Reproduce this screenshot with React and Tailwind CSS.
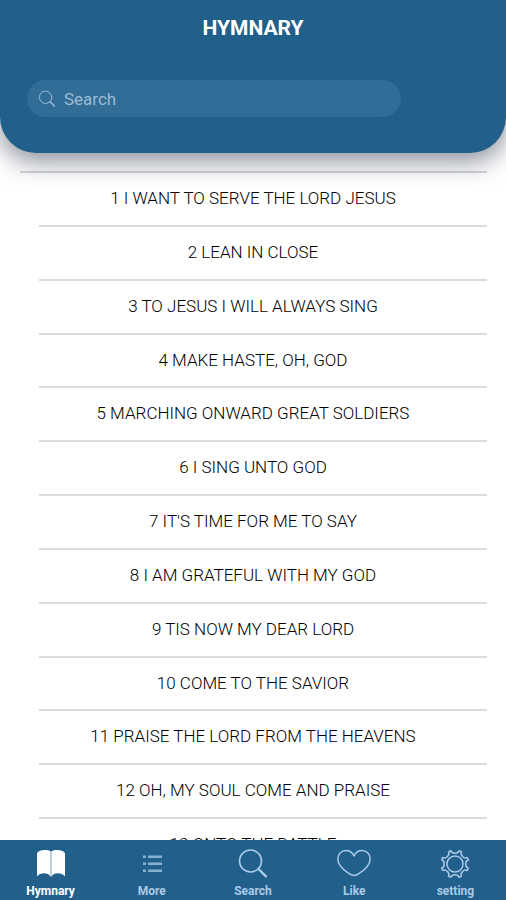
import React, { useState } from "react";

const hymns = [
  "1 I WANT TO SERVE THE LORD JESUS",
  "2 LEAN IN CLOSE",
  "3 TO JESUS I WILL ALWAYS SING",
  "4 MAKE HASTE, OH, GOD",
  "5 MARCHING ONWARD GREAT SOLDIERS",
  "6 I SING UNTO GOD",
  "7 IT'S TIME FOR ME TO SAY",
  "8 I AM GRATEFUL WITH MY GOD",
  "9 TIS NOW MY DEAR LORD",
  "10 COME TO THE SAVIOR",
  "11 PRAISE THE LORD FROM THE HEAVENS",
  "12 OH, MY SOUL COME AND PRAISE",
  "13 ONTO THE BATTLE",
];

const BookIcon = () => (
  <svg className="w-8 h-8" viewBox="0 0 32 32" fill="currentColor">
    <path d="M2 5.500C3 2.800 6.500 2 10 2c2.800 0 4.900.5 5.700 1.500v25.500c-1.500-2.800-3.700-3.700-6.500-3.700-2.900 0-5.500 1.200-7.200 3.200z" />
    <path d="M30 5.500C29 2.800 25.500 2 22 2c-2.800 0-4.900.5-5.700 1.500v25.500c1.500-2.800 3.700-3.700 6.500-3.700 2.900 0 5.500 1.200 7.200 3.200z" />
  </svg>
);

const ListIcon = () => (
  <svg className="w-8 h-8" viewBox="0 0 32 32" fill="currentColor">
    <path
      d="M7 7.500h3v2.500H7zM12 7.500h14v2.500H12zM7 14.500h3v2.500H7zM12 14.500h14v2.500H12zM7 21.500h3v2.500H7zM12 21.500h14v2.500H12z"
      opacity="0.75"
    />
  </svg>
);

const SearchIcon = ({ className }) => (
  <svg
    className={className}
    viewBox="0 0 32 32"
    fill="none"
    stroke="currentColor"
    strokeLinecap="round"
  >
    <circle cx="13.500" cy="13" r="11" strokeWidth="1.600" />
    <path d="M21.500 21l7.500 7.300" strokeWidth="2.400" />
  </svg>
);

const HeartIcon = () => (
  <svg
    className="w-9 h-8"
    viewBox="0 0 36 32"
    fill="none"
    stroke="currentColor"
    strokeWidth="1.500"
    strokeLinejoin="round"
  >
    <path d="M18 8C16.300 4.300 13.200 2.500 10 2.500c-4.700 0-8.200 3.700-8.200 8.200C1.800 17.500 8 22.500 14 26.200c2.700 1.700 5.300 1.700 8 0 6-3.700 12.200-8.700 12.200-15.500 0-4.500-3.500-8.200-8.200-8.200-3.200 0-6.300 1.800-8 5.500z" />
  </svg>
);

const NOTCHES = [0, 45, 90, 135, 180, 225, 270, 315];

const GearIcon = () => (
  <svg
    className="w-8 h-8"
    viewBox="0 0 32 32"
    fill="none"
    stroke="currentColor"
    strokeWidth="1.500"
    strokeLinejoin="round"
  >
    <circle cx="16" cy="16" r="8" />
    {NOTCHES.map((angle) => (
      <path
        key={angle}
        transform={`rotate(${angle} 16 16)`}
        d="M9.430 3.640L11.910 2.610C12.800 6.200 19.200 6.200 20.090 2.610"
      />
    ))}
  </svg>
);

const tabs = [
  { name: "Hymnary", icon: <BookIcon /> },
  { name: "More", icon: <ListIcon /> },
  { name: "Search", icon: <SearchIcon className="w-8 h-8" /> },
  { name: "Like", icon: <HeartIcon /> },
  { name: "setting", icon: <GearIcon /> },
];

const App = () => {
  const [query, setQuery] = useState("");
  const [activeTab, setActiveTab] = useState("Hymnary");

  const visible = hymns.filter((h) =>
    h.toLowerCase().includes(query.trim().toLowerCase()),
  );

  return (
    <div className="flex flex-col w-full h-screen bg-white font-[Roboto,sans-serif]">
      <header className="relative z-10 shrink-0 pt-3 pb-9 bg-[#22608c] rounded-b-[36px] shadow-[0_8px_26px_rgba(15,25,50,0.5)]">
        <h1 className="text-center text-white text-[21px] leading-8 font-bold">
          HYMNARY
        </h1>
        <label className="flex items-center gap-2 w-[74%] h-[37px] mt-9 ml-[27px] px-[11px] rounded-full bg-[#316d97] text-[#a3c3dc]">
          <SearchIcon className="w-[18px] h-[18px] shrink-0" />
          <input
            type="text"
            aria-label="Search"
            value={query}
            onChange={(e) => setQuery(e.target.value)}
            placeholder="Search"
            className="flex-1 min-w-0 bg-transparent text-[17px] leading-6 outline-none placeholder:text-[#9dbcd5]"
          />
        </label>
      </header>

      <main className="flex-1 min-h-0 pt-[18px] overflow-y-auto [scrollbar-width:none]">
        <div className="ml-5 mr-[19px] border-t-2 border-[#d4d6d9]" />
        <ul className="grid grid-rows-13 h-[700px] ml-[39px] mr-[19px]">
          {visible.map((hymn) => (
            <li key={hymn} className="border-b-2 border-[#dcdcdc]">
              <a
                href="#hymn"
                className="block -ml-5 pt-[13px] text-center text-[17px] leading-6 font-light text-black"
              >
                {hymn}
              </a>
            </li>
          ))}
        </ul>
      </main>

      <nav className="relative z-10 grid grid-cols-5 shrink-0 pt-2 pb-0.5 bg-[#22608c]">
        {tabs.map((tab) => (
          <button
            key={tab.name}
            type="button"
            onClick={() => setActiveTab(tab.name)}
            className={`flex flex-col items-center gap-1 text-[12px] leading-[14px] font-bold ${
              activeTab === tab.name ? "text-white" : "text-[#a9cae8]"
            }`}
          >
            {tab.icon}
            <span>{tab.name}</span>
          </button>
        ))}
      </nav>
    </div>
  );
};

export default App;
